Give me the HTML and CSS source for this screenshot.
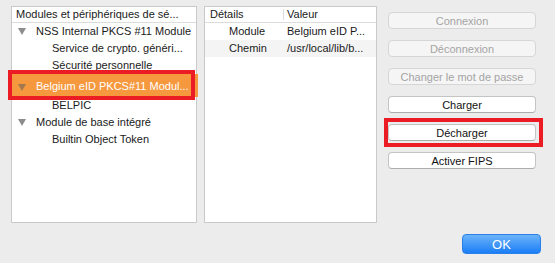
FILE: index.html
```html
<!DOCTYPE html>
<html lang="fr">
<head>
    <meta charset="UTF-8">
    <title>Gestionnaire de périphériques</title>
    <link rel="stylesheet" href="styles.css">
</head>
<body>
    <div class="dialog">
        <div class="main">
            <div class="panel tree">
                <div class="head">Modules et périphériques de sé...</div>
                <div class="row parent"><span class="twisty"></span>NSS Internal PKCS #11 Module</div>
                <div class="row child">Service de crypto. généri...</div>
                <div class="row child">Sécurité personnelle</div>
                <div class="row parent selected"><span class="twisty"></span>Belgium eID PKCS#11 Modul...</div>
                <div class="row child">BELPIC</div>
                <div class="row parent"><span class="twisty"></span>Module de base intégré</div>
                <div class="row child">Builtin Object Token</div>
            </div>

            <div class="panel details">
                <div class="head cols">
                    <span class="col-key">Détails</span>
                    <span class="col-val">Valeur</span>
                </div>
                <div class="row cols">
                    <span class="col-key">Module</span>
                    <span class="col-val">Belgium eID P...</span>
                </div>
                <div class="row cols alt">
                    <span class="col-key">Chemin</span>
                    <span class="col-val">/usr/local/lib/b...</span>
                </div>
            </div>

            <div class="actions">
                <button class="btn" disabled>Connexion</button>
                <button class="btn" disabled>Déconnexion</button>
                <button class="btn" disabled>Changer le mot de passe</button>
                <button class="btn">Charger</button>
                <button class="btn marked">Décharger</button>
                <button class="btn">Activer FIPS</button>
            </div>
        </div>

        <div class="footer">
            <button class="ok">OK</button>
        </div>
    </div>
</body>
</html>
```

FILE: styles.css
```css
body {
    margin: 0;
    background: #ececec;
    font-family: 'Liberation Sans', Arial, sans-serif;
    font-size: 11px;
    color: #1a1a1a;
}

.dialog {
    width: 555px;
    height: 263px;
}

.main {
    display: flex;
    padding: 6px 0 0 11px;
}

.panel {
    background: #fff;
    border: 1px solid #c9c9c9;
    box-sizing: border-box;
    height: 217px;
}

.tree {
    width: 186px;
}

.details {
    width: 173px;
    margin-left: 7px;
}

.head {
    height: 16px;
    line-height: 15px;
    border-bottom: 1px solid #dcdcdc;
    box-sizing: border-box;
    padding-left: 4px;
    white-space: nowrap;
}

.row {
    height: 17px;
    line-height: 17px;
    white-space: nowrap;
}

.parent {
    padding-left: 5px;
}

/* disclosure triangle */
.twisty {
    display: inline-block;
    width: 0;
    height: 0;
    border-left: 4px solid transparent;
    border-right: 4px solid transparent;
    border-top: 7px solid #8d8d8d;
    margin: 0 10px 1px 1px;
    vertical-align: middle;
}

.child {
    padding-left: 40px;
}

/* the highlighted row is a bit taller in the capture */
.selected {
    position: relative;
    height: 23px;
    line-height: 25px;
    background: #f6983e;
    color: #fff;
    margin-right: -2px;
}

.selected .twisty {
    border-top-color: #a4784f;
    margin-bottom: -1px;
}

.selected::after {
    content: "";
    position: absolute;
    left: -4px;
    top: -4px;
    width: 187px;
    height: 30px;
    border: 4px solid #ec1c24;
    box-sizing: border-box;
}

.cols {
    display: flex;
    padding-left: 0;
}

.col-key {
    width: 78px;
    box-sizing: border-box;
}

.head .col-key {
    padding-left: 5px;
}

.head .col-val {
    border-left: 1px solid #dcdcdc;
    padding-left: 3px;
    line-height: 11px;
    margin-top: 2px;
    height: 11px;
}

.row .col-key {
    padding-left: 24px;
}

.row .col-val {
    padding-left: 4px;
}

.alt {
    background: #f4f4f4;
}

.actions {
    display: flex;
    flex-direction: column;
    gap: 11px;
    width: 148px;
    margin-left: 11px;
    padding-top: 6px;
}

.btn {
    height: 17px;
    padding: 0;
    font-family: inherit;
    font-size: 11px;
    color: #111;
    background: #fff;
    border: 1px solid #c4c4c4;
    border-bottom-color: #adadad;
    border-radius: 4px;
    position: relative;
}

.btn:disabled {
    color: #a4a4a4;
    background: #f5f5f5;
    border-color: #d6d6d6;
}

.marked::after {
    content: "";
    position: absolute;
    left: -5px;
    top: -7px;
    width: 159px;
    height: 29px;
    border: 4px solid #ec1c24;
    box-sizing: border-box;
}

.footer {
    display: flex;
    justify-content: flex-end;
    padding: 11px 14px 0 0;
}

.ok {
    width: 79px;
    height: 20px;
    padding: 0;
    font-family: inherit;
    font-size: 13px;
    color: #fff;
    background: linear-gradient(#6cb3fa, #1b7ef6);
    border: 1px solid #2a80e8;
    border-radius: 4px;
}
```
